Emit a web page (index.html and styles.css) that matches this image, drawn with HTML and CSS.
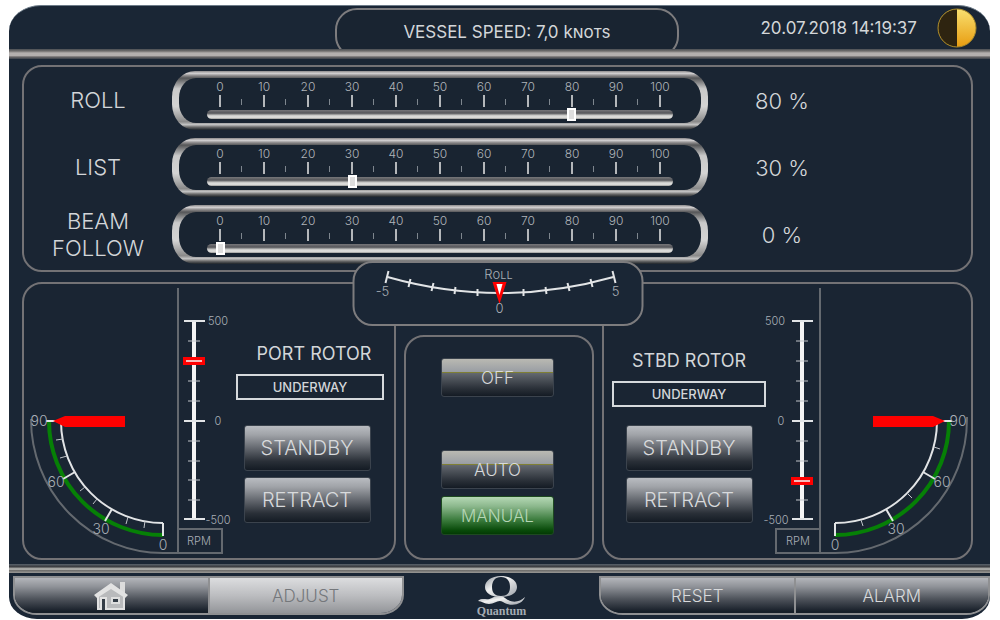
FILE: index.html
```html
<!DOCTYPE html>
<html lang="en">
<head>
    <meta charset="UTF-8">
    <meta name="viewport" content="width=device-width, initial-scale=1.0">
    <title>Quantum Rotor Control</title>
    <link rel="stylesheet" href="styles.css">
</head>
<body>
    <div class="screen">
        <header class="topbar">
            <div class="speed">VESSEL SPEED: 7,0 <span class="unit">knots</span></div>
            <div class="clock">
                <time datetime="2018-07-20T14:19:37">20.07.2018 14:19:37</time>
                <svg class="daynight" viewBox="0 0 40 40" aria-hidden="true">
                    <defs>
                        <linearGradient id="sun" x1="0" y1="0" x2="0" y2="1">
                            <stop offset="0" stop-color="#f8e070"/>
                            <stop offset="1" stop-color="#e89c10"/>
                        </linearGradient>
                    </defs>
                    <circle cx="20" cy="20" r="19" fill="url(#sun)"/>
                    <path d="M20 1a19 19 0 0 0 0 38z" fill="#2e2410"/>
                    <circle cx="20" cy="20" r="19" fill="none" stroke="#a98a2c"/>
                </svg>
            </div>
        </header>
        <div class="divider"></div>

        <main>
            <!-- Stabilizer gains -->
            <section class="panel gains">
                <label for="roll">ROLL</label>
                <div class="gauge">
                    <div class="gauge-inner">
                        <ol class="scale"><li>0</li><li>10</li><li>20</li><li>30</li><li>40</li><li>50</li><li>60</li><li>70</li><li>80</li><li>90</li><li>100</li></ol>
                        <div class="groove"><input type="range" id="roll" min="0" max="100" value="80"></div>
                    </div>
                </div>
                <output for="roll">80 %</output>

                <label for="list">LIST</label>
                <div class="gauge">
                    <div class="gauge-inner">
                        <ol class="scale"><li>0</li><li>10</li><li>20</li><li>30</li><li>40</li><li>50</li><li>60</li><li>70</li><li>80</li><li>90</li><li>100</li></ol>
                        <div class="groove"><input type="range" id="list" min="0" max="100" value="30"></div>
                    </div>
                </div>
                <output for="list">30 %</output>

                <label for="beam">BEAM<br>FOLLOW</label>
                <div class="gauge">
                    <div class="gauge-inner">
                        <ol class="scale"><li>0</li><li>10</li><li>20</li><li>30</li><li>40</li><li>50</li><li>60</li><li>70</li><li>80</li><li>90</li><li>100</li></ol>
                        <div class="groove"><input type="range" id="beam" min="0" max="100" value="0"></div>
                    </div>
                </div>
                <output for="beam">0 %</output>
            </section>

            <div class="lower">
                <!-- Port rotor -->
                <section class="panel rotor port">
                    <svg class="dial" width="212" height="274" viewBox="-139 -137 212 274">
                        <path class="frame" d="M15 -133V132M-132 -2A132 134 0 0 0 0 132H15M15 108H59V132H15"/>
                        <path class="green" d="M-114 0A114 114 0 0 0 0 114"/>
                        <path class="arc" d="M-102 0A102 102 0 0 0 0 102"/>
                        <path class="major" d="M0 102V115M-102 0H-117M-51 88L-58 100M-88 51L-100 58"/>
                        <path class="minor" d="M-18 100L-19 107M-35 96L-37 103M-66 78L-70 83M-78 66L-83 70M-96 35L-103 37M-100 18L-107 19"/>
                        <path class="bar" d="M31 -100V98"/>
                        <path class="major" d="M21 -100H42M21 0H42M21 98H42"/>
                        <path class="minor" d="M25 -80H37M25 -60H37M25 -40H37M25 -20H37M25 20H37M25 40H37M25 59H37M25 79H37"/>
                        <path class="needle" d="M-110 0L-98 -5H-38V6H-98z"/>
                        <path class="marker" d="M20 -60H42"/>
                        <path class="marker-line" d="M23 -60H39"/>
                        <g class="deg">
                            <text x="-124" y="5">90</text>
                            <text x="-107" y="66">60</text>
                            <text x="-62" y="113">30</text>
                            <text x="0" y="129">0</text>
                        </g>
                        <g class="rpm">
                            <text x="55" y="-96">500</text>
                            <text x="55" y="4">0</text>
                            <text x="55" y="103">-500</text>
                            <text x="36" y="124">RPM</text>
                        </g>
                    </svg>
                    <div class="controls">
                        <h2>PORT ROTOR</h2>
                        <div class="status">UNDERWAY</div>
                        <div class="actions">
                            <button type="button" class="btn">STANDBY</button>
                            <button type="button" class="btn">RETRACT</button>
                        </div>
                    </div>
                </section>

                <!-- Operating mode -->
                <section class="panel mode">
                    <button type="button" class="btn lined off">OFF</button>
                    <button type="button" class="btn lined">AUTO</button>
                    <button type="button" class="btn active">MANUAL</button>
                </section>

                <!-- Starboard rotor -->
                <section class="panel rotor stbd">
                    <div class="controls">
                        <h2>STBD ROTOR</h2>
                        <div class="status">UNDERWAY</div>
                        <div class="actions">
                            <button type="button" class="btn">STANDBY</button>
                            <button type="button" class="btn">RETRACT</button>
                        </div>
                    </div>
                    <svg class="dial" width="205" height="274" viewBox="-69 -137 205 274">
                        <path class="frame" d="M-15 -133V132M132 -4V-2A132 134 0 0 1 0 132H-15M-15 108H-59V132H-15"/>
                        <path class="green" d="M114 0A114 114 0 0 1 0 114"/>
                        <path class="arc" d="M102 0A102 102 0 0 1 0 102"/>
                        <path class="major" d="M0 102V115M102 0H117M51 88L58 100M88 51L100 58"/>
                        <path class="minor" d="M26 99L28 105M72 72L77 77M99 26L105 28"/>
                        <path class="bar" d="M-33 -100V98"/>
                        <path class="major" d="M-43 -100H-22M-43 0H-22M-43 98H-22"/>
                        <path class="minor" d="M-39 -80H-27M-39 -60H-27M-39 -40H-27M-39 -20H-27M-39 20H-27M-39 40H-27M-39 59H-27M-39 79H-27"/>
                        <path class="needle" d="M110 0L98 -5H38V6H98z"/>
                        <path class="marker" d="M-44 60H-22"/>
                        <path class="marker-line" d="M-41 60H-25"/>
                        <g class="deg">
                            <text x="123" y="5">90</text>
                            <text x="107" y="66">60</text>
                            <text x="61" y="113">30</text>
                            <text x="0" y="129">0</text>
                        </g>
                        <g class="rpm">
                            <text x="-60" y="-96">500</text>
                            <text x="-54" y="4">0</text>
                            <text x="-59" y="103">-500</text>
                            <text x="-37" y="124">RPM</text>
                        </g>
                    </svg>
                </section>

                <!-- Roll angle, sits over the panel edges -->
                <div class="roll-angle">
                    <svg width="287" height="61" viewBox="0 0 287 61">
                        <path class="arc" d="M33 14Q146 46 259 14"/>
                        <path class="major" d="M34 8L31 20M258 8L261 20"/>
                        <path class="major" d="M56 16L54 24M79 20L77 28M101 24L100 31M123 26V33M169 26V33M191 24L192 31M213 20L215 28M236 16L238 24"/>
                        <path d="M138 19H152L145 41z" fill="#f00"/>
                        <path d="M142 21H148L145 32z" fill="#fff"/>
                        <text class="caps" x="144" y="16">Roll</text>
                        <text x="28" y="33">-5</text>
                        <text x="261" y="33">5</text>
                        <text x="145" y="50">0</text>
                    </svg>
                </div>
            </div>
        </main>

        <div class="divider bottom"></div>
        <footer class="bottombar">
            <nav class="tabs">
                <button type="button" class="tab" aria-label="Home">
                    <svg width="36" height="30" viewBox="0 0 36 30">
                        <path d="M27 1H32V12H27z" fill="#dcdcdc"/>
                        <path d="M5 13L18 4L31 13V28H5z" fill="#b9babc"/>
                        <path d="M18 2L1 14L4 17L18 8L32 17L35 14z" fill="#e2e2e2"/>
                        <path d="M5 15V28H8V17H13V28H31V15" fill="none" stroke="#e2e2e2" stroke-width="2"/>
                        <path d="M9 18H12V29H9z" fill="#343c46"/>
                        <path d="M19 17H26V22H19z" fill="#343c46" stroke="#dedede" stroke-width="2"/>
                    </svg>
                </button>
                <button type="button" class="tab current">ADJUST</button>
            </nav>
            <div class="logo">
                <svg width="50" height="30" viewBox="0 0 50 30" aria-hidden="true">
                    <defs>
                        <linearGradient id="metal" x1="0" y1="0" x2="1" y2="1">
                            <stop offset="0" stop-color="#8f959d"/>
                            <stop offset="0.4" stop-color="#f2f2f2"/>
                            <stop offset="1" stop-color="#9aa0a8"/>
                        </linearGradient>
                    </defs>
                    <path fill="url(#metal)" fill-rule="evenodd" d="M24 0C34 0 40 5 40 11S34 21 24 21S8 17 8 11S14 0 24 0zM24 1C18 1 15 5 15 11S18 20 24 20S33 17 33 11S30 1 24 1z"/>
                    <path fill="url(#metal)" d="M1 25C5 21 10 25 15 22C18 20 24 19 28 22C34 27 42 27 48 21C45 29 34 31 26 26C21 23 18 28 12 28C7 28 5 25 1 25z"/>
                </svg>
                <span>Quantum</span>
            </div>
            <nav class="tabs">
                <button type="button" class="tab">RESET</button>
                <button type="button" class="tab">ALARM</button>
            </nav>
        </footer>
    </div>
</body>
</html>
```
FILE: styles.css
```css
* {
    box-sizing: border-box;
}

body {
    margin: 0;
    background-color: #fff;
    color: #d3d6d9;
    font-family: Inter, "Liberation Sans", sans-serif;
    font-weight: 300;
}

button {
    font-family: inherit;
    font-weight: 300;
    cursor: pointer;
}

.screen {
    margin: 5px 10px 0 9px;
    background-color: #1a2635;
    border-top: 1px solid #6d7b88;
    border-radius: 32px 32px 28px 28px / 26px 26px 22px 22px;
    overflow: hidden;
}

/* top bar */
.topbar {
    display: grid;
    grid-template-columns: 1fr 344px 1fr;
    height: 43px;
    padding-left: 15px;
    overflow: hidden;
}

.speed {
    grid-column: 2;
    height: 50px;
    margin-top: 2px;
    border: 2px solid #7d7c7e;
    border-radius: 22px;
    background-color: #192431;
    text-align: center;
    font-size: 17px;
    line-height: 44px;
    font-weight: 400;
}

.unit {
    font-variant: small-caps;
}

.clock {
    display: flex;
    align-items: center;
    justify-content: flex-end;
    gap: 20px;
    height: 43px;
    padding-right: 13px;
    font-size: 17px;
    font-weight: 400;
}

.daynight {
    width: 40px;
    height: 40px;
}

.divider {
    height: 10px;
    background: linear-gradient(#4a4e54, #6f6d6d 20%, #b3afae 40%, #b3afae 65%, #6a6869 80%, #3a414b);
}

.divider.bottom {
    height: 9px;
    margin-top: 4px;
    background: linear-gradient(#59626c, #3a3c40 30%, #a5a5a3 50%, #b0b0ae 60%, #6e6d6b 70%, #9a9996);
}

main {
    padding: 6px 17px 0 13px;
}

.panel {
    border: 2px solid #737275;
    border-radius: 20px;
    background-color: #1a2533;
}

/* gains */
.gains {
    display: grid;
    grid-template-columns: 148px 1fr 263px;
    row-gap: 8px;
    align-items: center;
    padding: 4px 0 6px;
}

.gains label {
    text-align: center;
    font-size: 22px;
    line-height: 27px;
}

.gains output {
    width: 148px;
    text-align: center;
    font-size: 22px;
}

.gauge {
    height: 59px;
    padding: 7px;
    border-radius: 23px / 26px;
    background: linear-gradient(#8c8a8b, #d2d0d1 4%, #8a8889 8%, #555658 12%, #c9c9c9 30%, #d4d4d4 60%, #8a8a8a 86%, #c4c4c4 91%, #6b6b6b 95%, #1c2228);
}

.gauge-inner {
    height: 45px;
    padding: 2px 19px 0;
    border-radius: 17px / 20px;
    background-color: #192431;
}

.scale {
    display: grid;
    grid-template-columns: repeat(11, 1fr);
    margin: 0;
    padding: 0;
    list-style: none;
}

.scale li {
    height: 28px;
    text-align: center;
    font-size: 12px;
    line-height: 14px;
    color: #b0b5ba;
    background:
        linear-gradient(#b4b7ba, #b4b7ba) 50% 15px / 2px 12px no-repeat,
        linear-gradient(#7e868e, #7e868e) 100% 19px / 1px 6px no-repeat;
}

.scale li:last-child {
    background: linear-gradient(#b4b7ba, #b4b7ba) 50% 15px / 2px 12px no-repeat;
}

.groove {
    display: flex;
    align-items: center;
    height: 9px;
    margin: 2px 9px 0;
    padding: 0 9px;
    border-radius: 5px;
    background: linear-gradient(#77777a, #55565a 35%, #c9c9c7 60%, #e6e6e4 80%, #9a9a98);
}

.groove input {
    appearance: none;
    width: 100%;
    height: 13px;
    margin: 0;
    background: none;
}

.groove input::-webkit-slider-thumb {
    appearance: none;
    width: 9px;
    height: 13px;
    border: 2px solid #fff;
    background-color: #dedede;
}

/* rotors and mode */
.lower {
    position: relative;
    display: grid;
    grid-template-columns: 374fr 190px 371fr;
    column-gap: 8px;
    margin-top: 10px;
}

.rotor {
    display: flex;
    justify-content: space-between;
}

.dial {
    flex: none;
    overflow: visible;
}

.controls {
    flex: 1;
    padding: 58px 10px 0 0;
}

.stbd .controls {
    padding: 65px 0 0 8px;
}

.controls h2 {
    margin: 0 0 8px;
    text-align: center;
    font-size: 18px;
    line-height: 24px;
    font-weight: 400;
}

.port h2 {
    padding-left: 8px;
}

.status {
    height: 26px;
    margin-bottom: 25px;
    border: 2px solid #d5d9dc;
    text-align: center;
    font-size: 13px;
    line-height: 22px;
    font-weight: 500;
}

.stbd .status {
    margin-bottom: 18px;
}

.actions {
    display: flex;
    flex-direction: column;
    align-items: center;
    gap: 6px;
}

.port .actions {
    padding-right: 6px;
}

.btn {
    width: 127px;
    height: 46px;
    padding: 0;
    border: 1px solid #3b434d;
    border-radius: 3px;
    background: linear-gradient(#b9bcc1, #a0a3a8 20%, #61656c 52%, #2a3038 80%, #141b24);
    color: #d8dadc;
    font-size: 20px;
}

.mode {
    display: flex;
    flex-direction: column;
    align-items: center;
    gap: 7px;
    margin-top: 53px;
    padding: 21px 3px 0 0;
}

.mode .btn {
    width: 113px;
    height: 39px;
    font-size: 17px;
}

.mode .off {
    margin-bottom: 46px;
}

.mode .lined {
    background: linear-gradient(#b9b9b2, #9a9ea4 34%, #7f7f34 35%, #7f7f34 38%, #62676e 39%, #2a3038 80%, #141b24);
}

.mode .active {
    border-color: #1d4a20;
    background: linear-gradient(#b4d8b4, #8cb88d 25%, #3f7f41 60%, #084a09 90%, #033a04);
    color: #b5d6b5;
}

/* instruments */
svg text {
    fill: #a9afb6;
    font-size: 13px;
    text-anchor: middle;
}

.deg text {
    font-size: 14px;
}

.rpm text {
    font-size: 11px;
}

.caps {
    font-variant: small-caps;
}

.frame {
    fill: none;
    stroke: #64696f;
    stroke-width: 2;
}

.green {
    fill: none;
    stroke: #068006;
    stroke-width: 4;
}

.arc {
    fill: none;
    stroke: #e2e4e6;
    stroke-width: 2;
}

.major {
    fill: none;
    stroke: #e2e4e6;
    stroke-width: 2;
}

.minor {
    fill: none;
    stroke: #c0c4c9;
    stroke-width: 1;
}

.bar {
    stroke: #f4f4f4;
    stroke-width: 4;
}

.needle {
    fill: #f00;
}

.marker {
    stroke: #f00;
    stroke-width: 8;
}

.marker-line {
    stroke: #f6b8b8;
    stroke-width: 2;
}

.roll-angle {
    position: absolute;
    top: -21px;
    left: 50%;
    transform: translateX(-50%);
    height: 65px;
    border: 2px solid #7d7c7e;
    border-radius: 20px;
    background-color: #1a2635;
}

.roll-angle svg {
    display: block;
}

/* bottom bar */
.bottombar {
    display: grid;
    grid-template-columns: 2fr 195px 2fr;
    padding: 3px 0 3px 4px;
}

.tabs {
    display: flex;
    height: 39px;
    border: 2px solid #8f9092;
    border-radius: 0 0 24px 24px / 0 0 20px 20px;
    overflow: hidden;
}

.tab {
    flex: 1;
    display: flex;
    align-items: center;
    justify-content: center;
    padding: 0;
    border: 0;
    background: linear-gradient(#b3b5ba, #8f9298 25%, #4e535b 60%, #171f29 95%);
    color: #d8dadc;
    font-size: 17px;
}

.tab + .tab {
    border-left: 2px solid #8f9092;
}

.tabs .current {
    background: linear-gradient(#dcdddf, #bcbdc0 50%, #939599);
    color: #74777b;
}

.logo {
    display: flex;
    flex-direction: column;
    align-items: center;
    font-family: "Liberation Serif", serif;
    font-size: 12px;
    line-height: 10px;
    font-weight: 700;
    color: #a4abb3;
}
```
